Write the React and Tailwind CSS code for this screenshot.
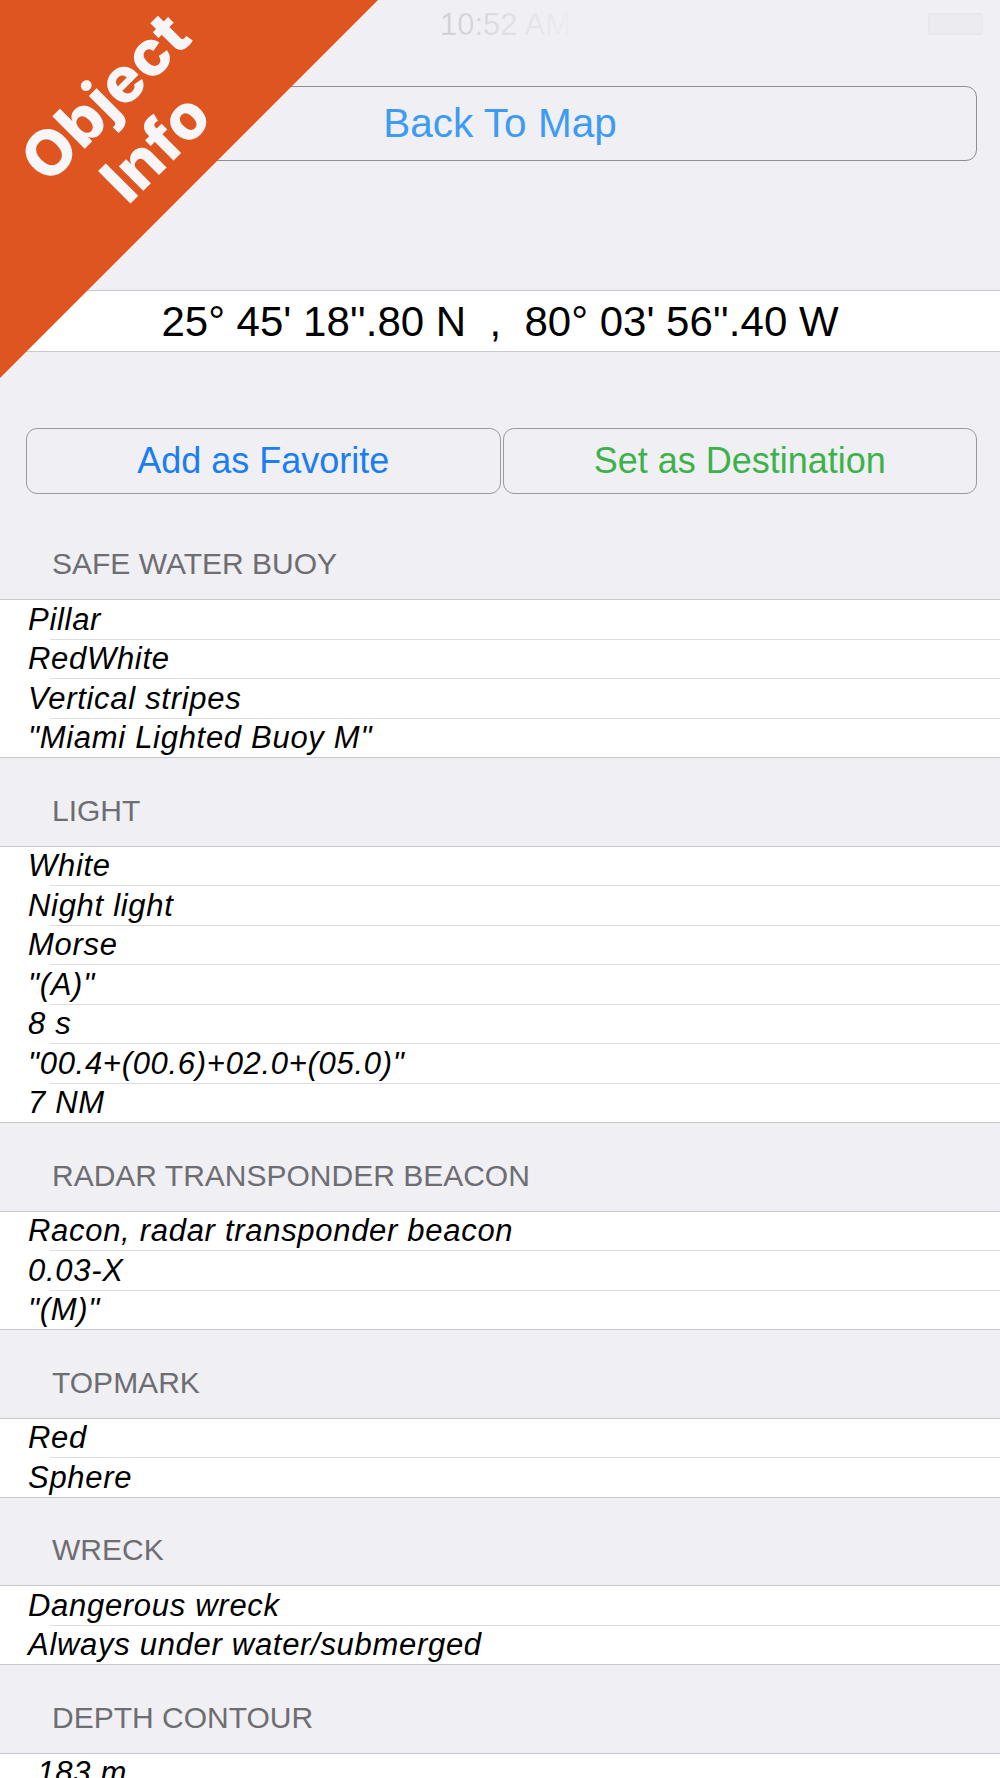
import React from 'react';

const sections = [
  { title: 'SAFE WATER BUOY', rows: ['Pillar', 'RedWhite', 'Vertical stripes', '"Miami Lighted Buoy M"'] },
  {
    title: 'LIGHT',
    rows: ['White', 'Night light', 'Morse', '"(A)"', '8 s', '"00.4+(00.6)+02.0+(05.0)"', '7 NM'],
  },
  { title: 'RADAR TRANSPONDER BEACON', rows: ['Racon, radar transponder beacon', '0.03-X', '"(M)"'] },
  { title: 'TOPMARK', rows: ['Red', 'Sphere'] },
  { title: 'WRECK', rows: ['Dangerous wreck', 'Always under water/submerged'] },
  { title: 'DEPTH CONTOUR', rows: [' 183 m', 'Depth contour'] },
];

function Banner() {
  return (
    <div className="absolute top-0 left-0 w-[378px] h-[378px] z-10 pointer-events-none">
      <div className="absolute inset-0 bg-[#df551f] [clip-path:polygon(0_0,100%_0,0_100%)]" />
      <div className="absolute left-[130px] top-[122px] -translate-x-1/2 -translate-y-1/2 -rotate-45 whitespace-nowrap text-center font-['Inter',sans-serif] font-extrabold text-[63px] leading-[71px] text-[#f6f5f8]">
        Object
        <br />
        Info
      </div>
    </div>
  );
}

function Section({ title, rows }) {
  return (
    <div>
      <div className="h-[87.5px] flex items-end pb-[20px] pl-[52px] text-[30px] leading-[30px] text-[#6d6d72]">
        {title}
      </div>
      <div className="bg-white border-y border-[#c8c7cc]">
        {rows.map((row, i) => (
          <div key={i}>
            {i > 0 && <div className="ml-[50px] h-px bg-[#dcdce0]" />}
            <div className="h-[38.5px] flex items-center pl-[28px] italic text-[31px] leading-none tracking-[0.7px] text-black whitespace-pre">
              {row}
            </div>
          </div>
        ))}
      </div>
    </div>
  );
}

export default function App() {
  return (
    <div className="relative w-[1000px] h-[1778px] overflow-hidden bg-[#efeff4] font-['Liberation_Sans',Arial,sans-serif]">
      <Banner />

      {/* status bar, faded out behind the page */}
      <div className="h-[86px]">
        <div className="flex h-[48px] items-center pl-[440px] pr-[17px]">
          <div className="text-[31px] leading-none bg-gradient-to-r from-[#d0d0d4] via-[#dfdfe3] to-[#ededf1] bg-clip-text text-transparent">
            10:52 AM
          </div>
          <div className="ml-auto w-[55px] h-[22px] rounded-[3px] border-2 border-[#e8e8ec] bg-[#ececf0]" />
        </div>
      </div>

      <div className="mx-[23px] h-[75px] flex items-center justify-center rounded-[11px] border-[1.5px] border-[#8e8e93] text-[40.5px] text-[#3d9cf2]">
        Back To Map
      </div>

      <div className="mt-[129px] h-[62px] bg-white border-y border-[#c8c7cc] flex items-center justify-center text-[42px] text-black whitespace-pre">
        {"25° 45' 18''.80 N  ,  80° 03' 56''.40 W"}
      </div>

      <div className="mt-[76px] pl-[26px] pr-[23px] flex gap-[2px]">
        <button className="flex-1 h-[66px] rounded-[11px] border border-[#9a9a9f] text-[36px] text-[#1b7ef0]">
          Add as Favorite
        </button>
        <button className="flex-1 h-[66px] rounded-[11px] border border-[#9a9a9f] text-[36px] text-[#3db24a]">
          Set as Destination
        </button>
      </div>

      <div className="mt-[17.5px]">
        {sections.map((s) => (
          <Section key={s.title} title={s.title} rows={s.rows} />
        ))}
      </div>
    </div>
  );
}
